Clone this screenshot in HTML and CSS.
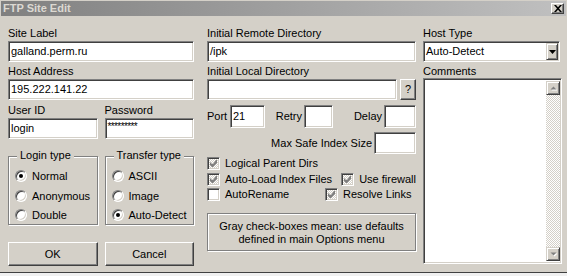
FILE: index.html
```html
<!DOCTYPE html>
<html>
<head>
<meta charset="utf-8">
<title>FTP Site Edit</title>
<link rel="stylesheet" href="styles.css">
</head>
<body>
<div class="window">
  <div class="titlebar">
    <span class="title">FTP Site Edit</span>
    <span class="close"><svg width="8" height="7" viewBox="0 0 8 7"><path d="M0 0h2l2 2.3 2-2.3h2l-3 3.5 3 3.5h-2l-2-2.3-2 2.3h-2l3-3.5z" fill="#000"/></svg></span>
  </div>
  <div class="body">
    <div class="col col-left">
      <span class="lbl">Site Label</span>
      <div class="field">galland.perm.ru</div>
      <span class="lbl gap3">Host Address</span>
      <div class="field">195.222.141.22</div>
      <div class="pair gap4">
        <div class="stack"><span class="lbl">User ID</span><div class="field">login</div></div>
        <div class="stack"><span class="lbl">Password</span><div class="field pw">*********</div></div>
      </div>
      <div class="pair groups">
        <div class="group">
          <span class="legend">Login type</span>
          <div class="opt"><span class="radio on"></span>Normal</div>
          <div class="opt"><span class="radio"></span>Anonymous</div>
          <div class="opt"><span class="radio"></span>Double</div>
        </div>
        <div class="group">
          <span class="legend">Transfer type</span>
          <div class="opt"><span class="radio"></span>ASCII</div>
          <div class="opt"><span class="radio"></span>Image</div>
          <div class="opt"><span class="radio on"></span>Auto-Detect</div>
        </div>
      </div>
      <div class="pair actions">
        <div class="btn">OK</div>
        <div class="btn">Cancel</div>
      </div>
    </div>

    <div class="col col-mid">
      <span class="lbl">Initial Remote Directory</span>
      <div class="field">/ipk</div>
      <span class="lbl gap3">Initial Local Directory</span>
      <div class="browse-row">
        <div class="field grow"></div>
        <div class="btn qbtn">?</div>
      </div>
      <div class="num-row">
        <span class="nl nl-port">Port</span><div class="field f-port">21</div>
        <span class="nl nl-retry">Retry</span><div class="field f-retry"></div>
        <span class="nl nl-delay">Delay</span><div class="field f-delay"></div>
      </div>
      <div class="max-row">
        <span class="nl">Max Safe Index Size</span><div class="field f-max"></div>
      </div>
      <div class="checks">
        <div class="crow"><span class="chk gray"><svg width="7" height="7" viewBox="0 0 7 7"><path d="M6 0h1v3l-4 4h-1l-2-2v-3l2 2h1z" fill="#808080"/></svg></span>Logical Parent Dirs</div>
        <div class="crow">
          <span class="citem w135"><span class="chk gray"><svg width="7" height="7" viewBox="0 0 7 7"><path d="M6 0h1v3l-4 4h-1l-2-2v-3l2 2h1z" fill="#808080"/></svg></span>Auto-Load Index Files</span>
          <span class="citem"><span class="chk gray"><svg width="7" height="7" viewBox="0 0 7 7"><path d="M6 0h1v3l-4 4h-1l-2-2v-3l2 2h1z" fill="#808080"/></svg></span>Use firewall</span>
        </div>
        <div class="crow">
          <span class="citem w118"><span class="chk"></span>AutoRename</span>
          <span class="citem"><span class="chk gray"><svg width="7" height="7" viewBox="0 0 7 7"><path d="M6 0h1v3l-4 4h-1l-2-2v-3l2 2h1z" fill="#808080"/></svg></span>Resolve Links</span>
        </div>
      </div>
      <div class="note">Gray check-boxes mean: use defaults<br>defined in main Options menu</div>
    </div>

    <div class="col col-right">
      <span class="lbl">Host Type</span>
      <div class="field select">
        <span class="sel-text">Auto-Detect</span>
        <span class="drop"><svg width="7" height="4" viewBox="0 0 7 4"><path d="M0 0h7l-3.5 4z" fill="#000"/></svg></span>
      </div>
      <span class="lbl gap3">Comments</span>
      <div class="field memo">
        <div class="memo-text"></div>
        <div class="vscroll">
          <span class="sbtn"><svg width="7" height="5" viewBox="0 0 7 5"><path d="M1.5 4.5h6l-3-3z" fill="#fff"/><path d="M0.5 3.5h6l-3-3z" fill="#808080"/></svg></span>
          <span class="track"></span>
          <span class="sbtn"><svg width="7" height="5" viewBox="0 0 7 5"><path d="M1.5 1.5h6l-3 3z" fill="#fff"/><path d="M0.5 0.5h6l-3 3z" fill="#808080"/></svg></span>
        </div>
      </div>
    </div>
  </div>
  <div class="strip"></div>
</div>
</body>
</html>
```

FILE: styles.css
```css
* { box-sizing: border-box; }
html, body { margin: 0; padding: 0; }
body {
  width: 567px;
  height: 276px;
  overflow: hidden;
  background: #d4d0c8;
  font-family: "Liberation Sans", Arial, sans-serif;
  font-size: 11px;
  color: #000;
}
.window {
  width: 567px;
  height: 276px;
  display: flex;
  flex-direction: column;
  background: #d4d0c8;
}
.titlebar {
  margin: 1px 1px 0 1px;
  height: 15px;
  flex: none;
  background: linear-gradient(to right, #808080, #c0c0c0);
  display: flex;
  align-items: center;
  justify-content: space-between;
  padding: 0 2px 0 2px;
}
.title {
  color: #dcd9d2;
  font-weight: bold;
  font-size: 11px;
  line-height: 15px;
}
.close {
  width: 13px;
  height: 11px;
  background: #d4d0c8;
  border: 1px solid;
  border-color: #fff #404040 #404040 #fff;
  box-shadow: inset -1px -1px #808080;
  display: flex;
  align-items: center;
  justify-content: center;
}
.body {
  flex: none;
  height: 256px;
  display: flex;
  padding: 11px 0 0 8px;
}
.col { display: flex; flex-direction: column; }
.col-left { width: 186px; }
.col-mid { width: 209px; margin-left: 13px; }
.col-right { width: 139px; margin-left: 7px; }

.lbl { display: block; height: 13px; line-height: 13px; white-space: nowrap; }
.gap3 { margin-top: 3px; }
.gap4 { margin-top: 4px; }

.field {
  height: 21px;
  margin-top: 1px;
  background: #fff;
  border: 1px solid;
  border-color: #808080 #fff #fff #808080;
  box-shadow: inset 1px 1px #404040, inset -1px -1px #d4d0c8;
  padding: 0 2px;
  line-height: 19px;
  white-space: nowrap;
  overflow: hidden;
}
.pw { font-size: 10px; line-height: 15px; letter-spacing: -0.6px; }

.pair { display: grid; grid-template-columns: 1fr 1fr; column-gap: 7px; }
.stack { display: flex; flex-direction: column; }

.groups { margin-top: 17px; }
.group {
  position: relative;
  height: 69px;
  border: 1px solid #808080;
  box-shadow: inset 1px 1px #fff, 1px 1px 0 #fff;
  padding: 13px 0 0 6px;
  display: flex;
  flex-direction: column;
  gap: 7.5px;
}
.legend {
  position: absolute;
  top: -8px;
  left: 8px;
  padding: 0 3px;
  background: #d4d0c8;
  line-height: 13px;
  white-space: nowrap;
}
.opt { display: flex; align-items: center; height: 12px; white-space: nowrap; }
.radio {
  position: relative;
  flex: none;
  width: 12px;
  height: 12px;
  margin-right: 5px;
  border-radius: 50%;
  background: #fff;
  border: 1px solid;
  border-color: #808080 #fff #fff #808080;
  box-shadow: inset 1px 1px #404040, inset -1px -1px #d4d0c8;
}
.radio.on::after {
  content: "";
  position: absolute;
  left: 3px;
  top: 3px;
  width: 4px;
  height: 4px;
  border-radius: 50%;
  background: #000;
}

.actions { margin-top: 17px; }
.btn {
  height: 24px;
  background: #d4d0c8;
  border: 1px solid;
  border-color: #fff #404040 #404040 #fff;
  box-shadow: inset -1px -1px #808080;
  text-align: center;
  line-height: 22px;
}

.browse-row { display: flex; margin-top: 1px; height: 21px; }
.browse-row .field { margin-top: 0; }
.grow { flex: 1; }
.qbtn { width: 16px; height: 21px; margin-left: 3px; line-height: 19px; }

.num-row { display: flex; align-items: center; margin-top: 5px; height: 23px; }
.num-row .field, .max-row .field { margin-top: 0; height: 23px; line-height: 21px; }
.nl { white-space: nowrap; line-height: 13px; }
.nl-port { width: 23px; }
.f-port { width: 35px; }
.nl-retry { width: 39px; text-align: right; padding-right: 2px; }
.f-retry { width: 29px; }
.nl-delay { width: 51px; text-align: right; padding-right: 2px; }
.f-delay { width: 32px; }
.max-row { display: flex; align-items: center; justify-content: flex-end; margin-top: 4px; height: 22px; }
.max-row .field { height: 22px; }
.max-row .nl { padding-right: 2px; }
.f-max { width: 42px; }

.checks { margin-top: 3px; display: flex; flex-direction: column; }
.crow { display: flex; align-items: flex-start; height: 15.5px; white-space: nowrap; line-height: 13px; }
.citem { display: flex; align-items: flex-start; }
.w135 { width: 135px; }
.w118 { width: 118px; }
.chk {
  flex: none;
  width: 13px;
  height: 13px;
  margin-right: 5px;
  background: #fff;
  border: 1px solid;
  border-color: #808080 #fff #fff #808080;
  box-shadow: inset 1px 1px #404040, inset -1px -1px #d4d0c8;
  display: flex;
  align-items: center;
  justify-content: center;
}
.chk.gray { background: repeating-conic-gradient(#d4d0c8 0 25%, #fff 0 50%) 0 0 / 2px 2px; }

.note {
  margin-top: 9.5px;
  height: 38px;
  border: 1px solid #808080;
  box-shadow: inset 1px 1px #fff, 1px 1px 0 #fff;
  text-align: center;
  line-height: 13px;
  padding-top: 6px;
}

.select { display: flex; align-items: center; padding: 0 1px 0 2px; width: 137px; }
.sel-text { flex: 1; }
.drop {
  width: 12px;
  height: 17px;
  background: #d4d0c8;
  border: 1px solid;
  border-color: #d4d0c8 #404040 #404040 #d4d0c8;
  box-shadow: inset 1px 1px #fff, inset -1px -1px #808080;
  display: flex;
  align-items: center;
  justify-content: center;
}
.memo {
  height: 186px;
  margin-top: 0;
  padding: 2px 1px 2px 2px;
  display: flex;
}
.memo-text { flex: 1; }
.vscroll { width: 14px; display: flex; flex-direction: column; }
.sbtn {
  height: 14px;
  flex: none;
  background: #d4d0c8;
  border: 1px solid;
  border-color: #d4d0c8 #404040 #404040 #d4d0c8;
  box-shadow: inset 1px 1px #fff, inset -1px -1px #808080;
  display: flex;
  align-items: center;
  justify-content: center;
}
.track { flex: 1; background: repeating-conic-gradient(#d4d0c8 0 25%, #fff 0 50%) 0 0 / 2px 2px; }

.strip {
  flex: none;
  height: 4px;
  border-top: 1px solid #404040;
  background: #f0f0f0;
}
```
